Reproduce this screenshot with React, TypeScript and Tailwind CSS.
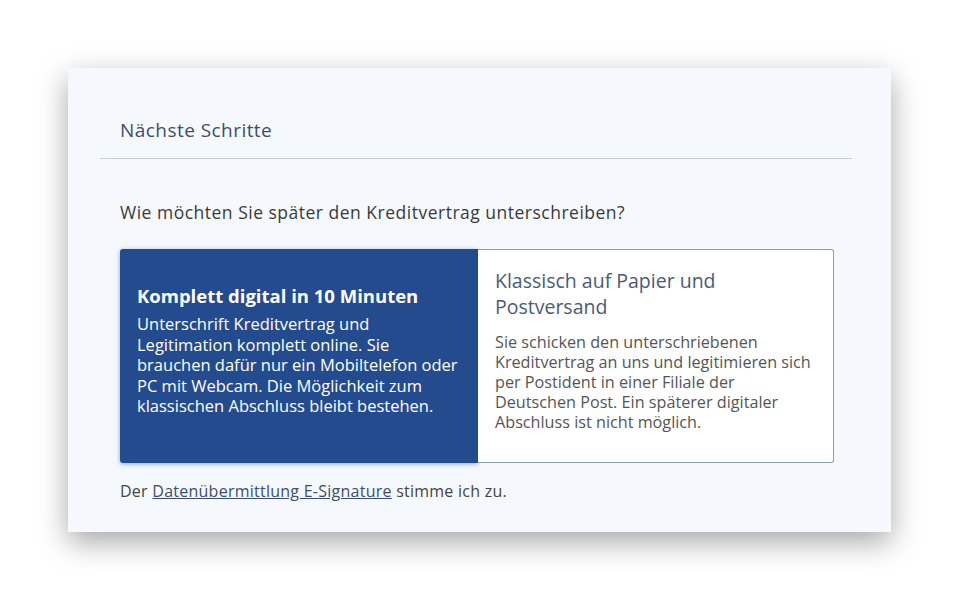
export default function App() {
  return (
    <div className="w-[960px] h-[601px] bg-white pt-[68px] pl-[68px]" style={{ fontFamily: '"Open Sans", "Noto Sans", sans-serif' }}>
      <div className="w-[823px] h-[464px] bg-[#f5f9fd] shadow-[0_10px_28px_rgba(0,0,0,0.35)] flex flex-col">
        <div className="pt-[48px] pl-[52px] pb-[14px] text-[19px] leading-[28px] tracking-[0.45px] text-[#3d4d6c]">Nächste Schritte</div>
        <div className="ml-[32px] mr-[39px] h-px bg-[#c9d1db]" />
        <div className="pl-[52px] pr-[57px]">
          <p className="mt-[40px] text-[17.5px] leading-[26px] tracking-[0.5px] text-[#3a3a3a]">Wie möchten Sie später den Kreditvertrag unterschreiben?</p>
          <div className="mt-[24px] grid grid-cols-[358px_356px] h-[214px]">
            <div className="bg-[#244b8d] rounded-l-[3px] shadow-[0_1px_4px_rgba(36,75,141,0.5)] flex flex-col justify-center pl-[17px] pr-[12px] pb-[12px] text-white">
              <div className="text-[18.5px] font-bold leading-[26px]">Komplett digital in 10 Minuten</div>
              <p className="text-[16.5px] leading-[20.5px] mt-[5px]">
                Unterschrift Kreditvertrag und Legitimation komplett online. Sie brauchen dafür nur ein Mobiltelefon oder PC mit Webcam. Die Möglichkeit zum klassischen Abschluss bleibt bestehen.
              </p>
            </div>
            <div className="bg-white border border-[#8e9bb0] border-l-0 rounded-r-[3px] flex flex-col justify-center pl-[17px] pr-[17px] pb-[12px]">
              <div className="text-[19.5px] leading-[26px] text-[#4a5a78]">Klassisch auf Papier und Postversand</div>
              <p className="text-[16.2px] leading-[20px] text-[#555] mt-[12px]">
                Sie schicken den unterschriebenen Kreditvertrag an uns und legitimieren sich per Postident in einer Filiale der Deutschen Post. Ein späterer digitaler Abschluss ist nicht möglich.
              </p>
            </div>
          </div>
          <p className="mt-[17px] text-[16px] leading-[22px] tracking-[0.25px] text-[#444]">
            Der <a className="underline text-[#3d4d6c]">Datenübermittlung E-Signature</a> stimme ich zu.
          </p>
        </div>
      </div>
    </div>
  );
}
